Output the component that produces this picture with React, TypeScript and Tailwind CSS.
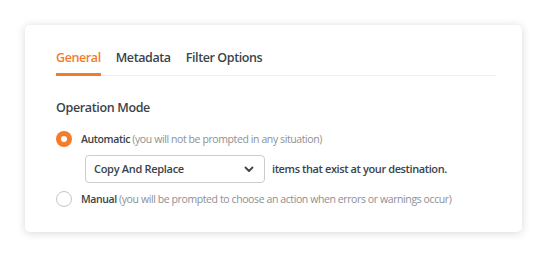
import { useState } from "react";

const TABS = ["General", "Metadata", "Filter Options"];

function Radio({ checked }: { checked: boolean }) {
  return checked ? (
    <span className="flex h-4 w-4 shrink-0 items-center justify-center rounded-full bg-[#f47b2a]">
      <span className="h-[6px] w-[6px] rounded-full bg-white" />
    </span>
  ) : (
    <span className="h-4 w-4 shrink-0 rounded-full border border-[#c3c6cb] bg-white" />
  );
}

export default function App() {
  const [tab] = useState("General");

  return (
    <div
      className="min-h-[258px] w-[547px] bg-white pl-[25px] pt-[25px] text-[#3c434a]"
      style={{ fontFamily: '"Open Sans", "Noto Sans", sans-serif' }}
    >
      <div className="flex h-[207px] w-[497px] flex-col rounded-[5px] bg-white pl-[31px] pr-[26px] pt-[24px] shadow-[0_1px_8px_rgba(30,40,60,0.18)]">
        <div className="flex gap-[15px] border-b border-[#edf0f3]">
          {TABS.map((t) => (
            <div
              key={t}
              className={`-mb-px border-b-[3px] pb-[6px] text-[12.5px] font-semibold leading-[18px] tracking-[-0.4px] ${
                t === tab
                  ? "border-[#f47b2a] text-[#f47b2a]"
                  : "border-transparent text-[#3c434a]"
              }`}
            >
              {t}
            </div>
          ))}
        </div>

        <div className="mt-[23px] text-[12.5px] font-semibold leading-[18px] tracking-[-0.35px]">
          Operation Mode
        </div>

        <div className="mt-[14px] flex items-center gap-[9px] text-[10.5px] leading-[16px]">
          <Radio checked />
          <span className="tracking-[-0.4px]">
            <span className="font-semibold text-[#3c434a]">Automatic</span>{" "}
            <span className="text-[#8c8f94]">
              (you will not be prompted in any situation)
            </span>
          </span>
        </div>

        <div className="ml-[29px] mt-[8px] flex items-center gap-[7px]">
          <div className="flex h-[28px] w-[180px] items-center justify-between rounded-[4px] border border-[#c9ccd1] pl-[8px] pr-[10px] text-[11px] font-semibold tracking-[-0.3px]">
            <span>Copy And Replace</span>
            <svg width="10" height="7" viewBox="0 0 10 7" fill="none">
              <path
                d="M1.5 1.5 5 5l3.5-3.5"
                stroke="#3c434a"
                strokeWidth="1.8"
                strokeLinecap="round"
                strokeLinejoin="round"
              />
            </svg>
          </div>
          <span className="text-[11px] font-semibold tracking-[-0.4px]">
            items that exist at your destination.
          </span>
        </div>

        <div className="mt-[8px] flex items-center gap-[9px] text-[10.5px] leading-[16px]">
          <Radio checked={false} />
          <span className="whitespace-nowrap tracking-[-0.4px]">
            <span className="font-semibold text-[#3c434a]">Manual</span>{" "}
            <span className="text-[#8c8f94]">
              (you will be prompted to choose an action when errors or warnings occur)
            </span>
          </span>
        </div>
      </div>
    </div>
  );
}
